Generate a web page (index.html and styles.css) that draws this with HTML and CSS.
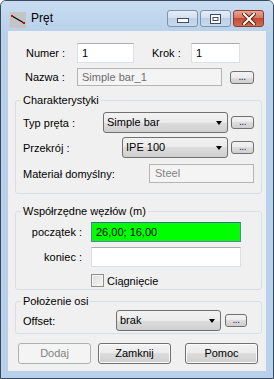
FILE: index.html
```
<!DOCTYPE html>
<html lang="pl">
<head>
    <meta charset="UTF-8">
    <meta name="viewport" content="width=device-width, initial-scale=1.0">
    <title>Pręt</title>
    <link rel="stylesheet" href="styles.css">
</head>
<body>
<div class="window">
    <div class="titlebar">
        <svg class="app-icon" viewBox="0 0 16 16">
            <rect width="16" height="16" fill="#c4c4c4"/>
            <path d="M2 4 L14 11" stroke="#000" stroke-width="1.2"/>
            <rect x="1" y="3" width="2" height="2" fill="#e00000"/>
            <rect x="13" y="10" width="2" height="2" fill="#e00000"/>
        </svg>
        <span class="title">Pręt</span>
        <div class="caption">
            <div class="cap">
                <svg width="12" height="5" viewBox="0 0 12 5"><rect x="0.5" y="0.5" width="11" height="4" fill="#fff" stroke="#3c4e66"/></svg>
            </div>
            <div class="cap">
                <svg width="11" height="10" viewBox="0 0 11 10"><rect x="0.5" y="0.5" width="10" height="9" fill="#fff" stroke="#3c4e66"/><rect x="3" y="3.5" width="5" height="3" fill="none" stroke="#3c4e66"/></svg>
            </div>
            <div class="cap cap-close">
                <svg width="14" height="12" viewBox="0 0 14 12"><path d="M2 1 L12 11 M12 1 L2 11" stroke="#5a1e14" stroke-width="4" stroke-linecap="square"/><path d="M2 1 L12 11 M12 1 L2 11" stroke="#fff" stroke-width="2" stroke-linecap="square"/></svg>
            </div>
        </div>
    </div>

    <div class="client">
        <div class="row row-top">
            <span class="lbl lbl-num">Numer :</span>
            <div class="tb tb-num">1</div>
            <span class="lbl lbl-krok">Krok :</span>
            <div class="tb tb-krok">1</div>
        </div>
        <div class="row row-name">
            <span class="lbl lbl-name">Nazwa :</span>
            <div class="tb tb-disabled tb-name">Simple bar_1</div>
            <div class="dots dots-name">...</div>
        </div>

        <fieldset class="group group-char">
            <legend>Charakterystyki</legend>
            <div class="grow grow-first">
                <span class="lbl">Typ pręta :</span>
                <div class="combo combo-typ">Simple bar<i class="arrow"></i></div>
                <div class="dots">...</div>
            </div>
            <div class="grow">
                <span class="lbl">Przekrój :</span>
                <div class="combo combo-prz">IPE 100<i class="arrow"></i></div>
                <div class="dots">...</div>
            </div>
            <div class="grow grow-mat">
                <span class="lbl">Materiał domyślny:</span>
                <div class="tb tb-disabled tb-mat">Steel</div>
            </div>
        </fieldset>

        <fieldset class="group group-coord">
            <legend>Współrzędne węzłów (m)</legend>
            <div class="crow crow-first">
                <span class="lbl lbl-right">początek :</span>
                <div class="tb tb-coord tb-active">26,00; 16,00</div>
            </div>
            <div class="crow">
                <span class="lbl lbl-right">koniec :</span>
                <div class="tb tb-coord"></div>
            </div>
            <div class="check-row">
                <span class="checkbox"></span>
                <span class="lbl">Ciągnięcie</span>
            </div>
        </fieldset>

        <fieldset class="group group-axis">
            <legend>Położenie osi</legend>
            <div class="grow grow-offset">
                <span class="lbl">Offset:</span>
                <div class="combo combo-offset">brak<i class="arrow"></i></div>
                <div class="dots dots-offset">...</div>
            </div>
        </fieldset>

        <div class="buttons">
            <div class="btn btn-disabled">Dodaj</div>
            <div class="btn">Zamknij</div>
            <div class="btn btn-help">Pomoc</div>
        </div>
    </div>
</div>
</body>
</html>
```

FILE: styles.css
```
* {
    box-sizing: border-box;
}
body {
    margin: 0;
    background: #fff;
    font-family: "Liberation Sans", Arial, sans-serif;
    font-size: 11px;
    color: #000;
}
.window {
    width: 274px;
    height: 379px;
    border: 1px solid #3a4a5e;
    border-radius: 6px 6px 0 0;
    background: #b9d1ea;
    padding-bottom: 7px;
}
.titlebar {
    height: 30px;
    display: flex;
    align-items: flex-start;
    padding: 9px 9px 0 9px;
    background: linear-gradient(#c9dcf1, #b9d1ea);
    border-radius: 5px 5px 0 0;
}
.app-icon {
    width: 16px;
    height: 16px;
    margin-top: 2px;
}
.title {
    margin-left: 5px;
    font-size: 12px;
    line-height: 17px;
}
.caption {
    margin-left: auto;
    display: flex;
    gap: 2px;
}
.cap {
    width: 31px;
    height: 17px;
    border: 1px solid #7f92ad;
    border-radius: 3px;
    background: linear-gradient(#e4edf8 0%, #d3e0f0 45%, #bcd0e8 50%, #cadbef 100%);
    display: flex;
    align-items: center;
    justify-content: center;
}
.cap:first-child {
    align-items: flex-end;
    padding-bottom: 3px;
}
.cap-close {
    border-color: #8c3a2b;
    background: linear-gradient(#e8a594 0%, #d67a62 45%, #c24a33 50%, #d26d52 100%);
}

.client {
    margin: 0 7px;
    height: 340px;
    background: #f0f0f0;
    padding-top: 12px;
}
.row {
    display: flex;
    align-items: center;
}
.lbl {
    white-space: nowrap;
}
.row-top {
    height: 20px;
    padding-left: 18px;
}
.lbl-num {
    width: 51px;
}
.lbl-krok {
    width: 39px;
    margin-left: 18px;
}
.tb {
    height: 20px;
    line-height: 18px;
    padding-left: 4px;
    background: #fff;
    border: 1px solid #dbdfe6;
    border-top-color: #abadb3;
    white-space: nowrap;
}
.tb-num {
    width: 57px;
}
.tb-krok {
    width: 49px;
}
.row-name {
    height: 18px;
    margin-top: 5px;
    padding-left: 17px;
}
.lbl-name {
    width: 52px;
}
.tb-disabled {
    background: #f4f4f4;
    border-color: #b5b5b5;
    color: #6d6d6d;
}
.tb-name {
    width: 145px;
    height: 18px;
    line-height: 16px;
}
.dots {
    width: 23px;
    height: 13px;
    margin-left: 3px;
    border: 1px solid #707070;
    border-radius: 3px;
    background: linear-gradient(#f2f2f2 0%, #ebebeb 50%, #dddddd 50%, #cfcfcf 100%);
    font-size: 10px;
    line-height: 9px;
    text-align: center;
    color: #1a1a60;
    letter-spacing: -0.5px;
}
.dots-name {
    width: 24px;
    margin-left: 8px;
}

.group {
    width: 247px;
    margin: 0 0 0 7px;
    padding: 0 7px;
    border: 1px solid #d5dfe5;
    border-radius: 3px;
    min-inline-size: 0;
}
.group legend {
    padding: 0 2px;
    margin-left: -2px;
    line-height: 14px;
}
.group-char {
    margin-top: 7px;
    padding-bottom: 10px;
}
.grow {
    display: flex;
    align-items: center;
    height: 21px;
    margin-top: 4px;
}
.grow-first {
    margin-top: 5px;
}
.grow-mat {
    height: 19px;
    margin-top: 6px;
}
.combo {
    position: relative;
    margin-left: auto;
    height: 21px;
    line-height: 19px;
    padding-left: 3px;
    border: 1px solid #707070;
    border-radius: 3px;
    background: linear-gradient(#f2f2f2 0%, #ebebeb 50%, #dddddd 50%, #cfcfcf 100%);
    white-space: nowrap;
}
.arrow {
    position: absolute;
    right: 5px;
    top: 8px;
    border-left: 3.5px solid transparent;
    border-right: 3.5px solid transparent;
    border-top: 4px solid #000;
}
.combo-typ {
    width: 125px;
}
.combo-prz {
    width: 106px;
}
.tb-mat {
    margin-left: auto;
    width: 105px;
    height: 19px;
    line-height: 17px;
    padding-left: 5px;
    color: #838383;
}

.group-coord {
    margin-top: 10px;
    padding-bottom: 2px;
}
.crow {
    display: flex;
    align-items: center;
    height: 20px;
    margin-top: 5px;
}
.crow-first {
    margin-top: 4px;
}
.lbl-right {
    width: 59px;
    text-align: right;
}
.tb-coord {
    width: 150px;
    margin-left: 9px;
}
.tb-active {
    background: #00ff00;
    border-color: #5d7fa3;
    border-top-color: #3d6a99;
}
.check-row {
    display: flex;
    align-items: center;
    height: 13px;
    margin-top: 7px;
    padding-left: 68px;
}
.checkbox {
    width: 13px;
    height: 13px;
    margin-right: 3px;
    border: 1px solid #8e8f8f;
    background: linear-gradient(135deg, #dcdcdc, #f6f6f6);
    box-shadow: inset 0 0 0 1px #f4f4f4;
}

.group-axis {
    margin-top: 4px;
    padding-bottom: 2px;
}
.grow-offset {
    margin-top: 2px;
}
.combo-offset {
    width: 105px;
}
.dots-offset {
    width: 22px;
    margin-left: 4px;
    margin-right: 7px;
}

.buttons {
    display: flex;
    margin-top: 9px;
    padding-left: 10px;
}
.btn {
    width: 73px;
    height: 21px;
    line-height: 19px;
    margin-right: 7px;
    text-align: center;
    border: 1px solid #707070;
    border-radius: 3px;
    background: linear-gradient(#f2f2f2 0%, #ebebeb 50%, #dddddd 50%, #cfcfcf 100%);
    box-shadow: inset 0 0 0 1px #fbfbfb;
}
.btn-disabled {
    border-color: #adb2b5;
    background: #f4f4f4;
    color: #838383;
    box-shadow: none;
}
.btn-help {
    margin-left: 7px;
}
```
